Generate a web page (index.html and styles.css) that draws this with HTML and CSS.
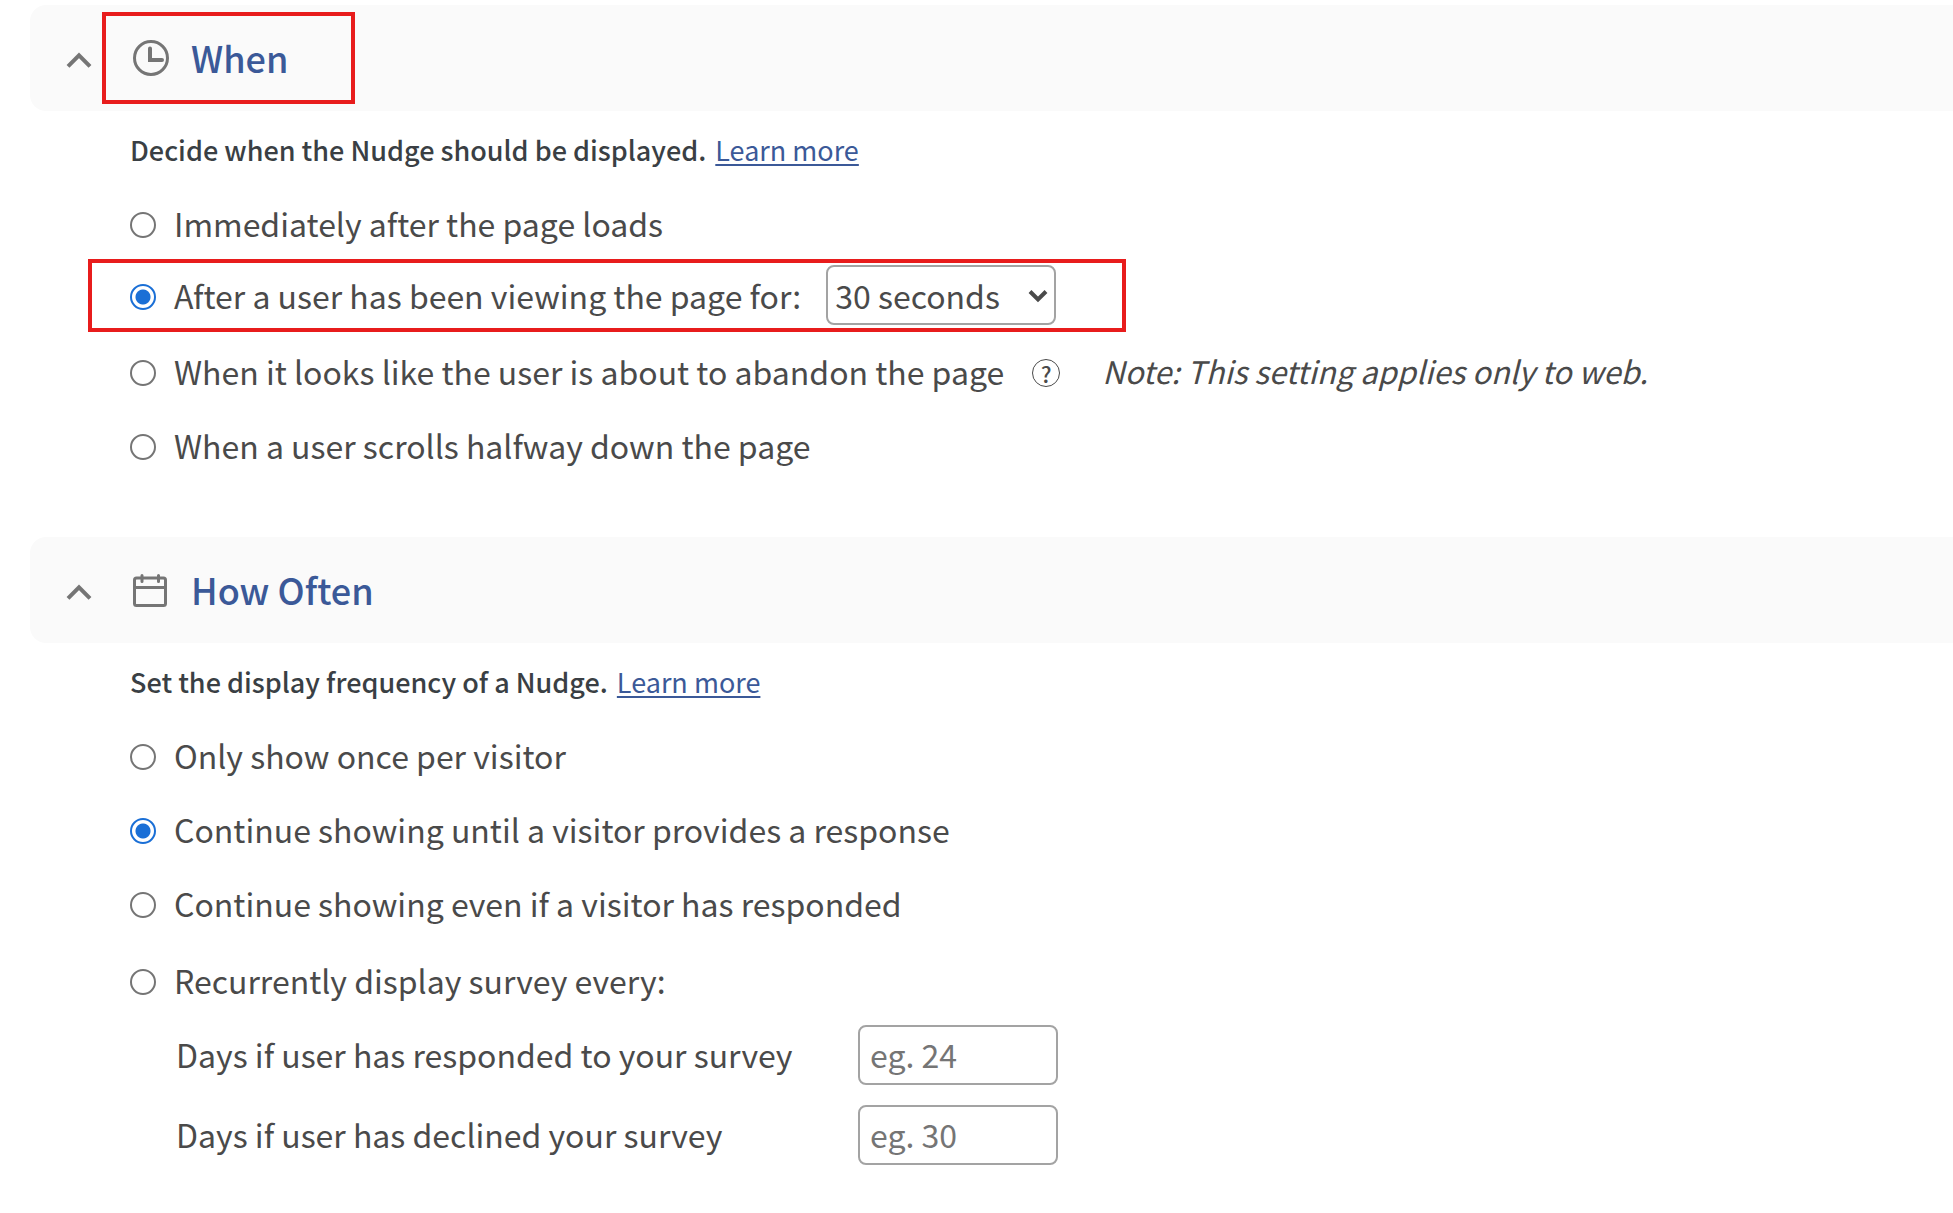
FILE: index.html
```html
<!doctype html>
<html lang="en">
<head>
<meta charset="utf-8">
<title>Nudge display settings</title>
<link rel="stylesheet" href="styles.css">
</head>

<body>

<main>
  <!-- when -->
  <section class="panel">
    <header class="panel-head">
      <button class="toggle" type="button" aria-label="Collapse When">
        <svg width="26" height="16" viewBox="0 0 26 16"><path d="M2 14.300 13 3.300l11 11" fill="none" stroke="#757575" stroke-width="4"/></svg>
      </button>
      <div class="panel-title marked">
        <svg class="icon" width="36" height="36" viewBox="0 0 36 36" fill="none" stroke="#757575"><circle cx="18" cy="18" r="16.500" stroke-width="3"/><path d="M17 8.500V20h12" stroke-width="4" stroke-linecap="round"/></svg>
        <h2>When</h2>
      </div>
    </header>

    <div class="panel-body">
      <p class="lead"><strong>Decide when the Nudge should be displayed.</strong> <a href="#">Learn more</a></p>
      <div class="options">
        <div class="option">
          <input type="radio" name="when" id="when-load">
          <label for="when-load">Immediately after the page loads</label>
        </div>
        <div class="option timed marked">
          <input type="radio" name="when" id="when-timed" checked>
          <label for="when-timed">After a user has been viewing the page for:</label>
          <span class="select">
            <select aria-label="Viewing time">
              <option>30 seconds</option>
              <option>60 seconds</option>
            </select>
            <svg width="20" height="14" viewBox="0 0 20 14"><path d="M2 2.500l8 8 8-8" fill="none" stroke="#4a4a4a" stroke-width="4"/></svg>
          </span>
        </div>
        <div class="option">
          <input type="radio" name="when" id="when-abandon">
          <label for="when-abandon">When it looks like the user is about to abandon the page</label>
          <button class="help" type="button" aria-label="Help">?</button>
          <em>Note: This setting applies only to web.</em>
        </div>
        <div class="option">
          <input type="radio" name="when" id="when-scroll">
          <label for="when-scroll">When a user scrolls halfway down the page</label>
        </div>
      </div>
    </div>
  </section>

  <!-- how often -->
  <section class="panel">
    <header class="panel-head">
      <button class="toggle" type="button" aria-label="Collapse How Often">
        <svg width="26" height="16" viewBox="0 0 26 16"><path d="M2 14.300 13 3.300l11 11" fill="none" stroke="#757575" stroke-width="4"/></svg>
      </button>
      <div class="panel-title">
        <svg class="icon" width="36" height="36" viewBox="0 0 36 36" fill="none" stroke="#757575" stroke-width="3"><rect x="1.500" y="6" width="31" height="27.500" rx="2"/><path d="M1.500 15.500h31"/><path d="M9 3.500v6M25.500 3.500v6" stroke-linecap="round"/></svg>
        <h2>How Often</h2>
      </div>
    </header>

    <div class="panel-body">
      <p class="lead"><strong>Set the display frequency of a Nudge.</strong> <a href="#">Learn more</a></p>
      <div class="options">
        <div class="option">
          <input type="radio" name="often" id="often-once">
          <label for="often-once">Only show once per visitor</label>
        </div>
        <div class="option">
          <input type="radio" name="often" id="often-until" checked>
          <label for="often-until">Continue showing until a visitor provides a response</label>
        </div>
        <div class="option">
          <input type="radio" name="often" id="often-even">
          <label for="often-even">Continue showing even if a visitor has responded</label>
        </div>
        <div class="option recurring">
          <input type="radio" name="often" id="often-recur">
          <label for="often-recur">Recurrently display survey every:</label>
        </div>
      </div>
      <div class="days">
        <label for="days-responded">Days if user has responded to your survey</label>
        <input type="text" id="days-responded" placeholder="eg. 24">
        <label for="days-declined">Days if user has declined your survey</label>
        <input type="text" id="days-declined" placeholder="eg. 30">
      </div>
    </div>
  </section>
</main>

</body>
</html>
```

FILE: styles.css
```css
:root {
  --head:   #fafafa;
  --txt:    #4a4a4a;
  --strong: #3a3f44;
  --link:   #3b5998;
  --radio:  #1a6fd6;
  --line:   #a3a3a3;
  --mark:   #e81c1c;
}

*,
*::after {
  box-sizing: border-box;
  margin: 0;
  padding: 0;
}
body {
  font-family: "Noto Sans CJK SC", sans-serif;
  font-size: 32px;
  line-height: 48px;
  background: #fff;
  color: var(--txt);
}
main {
  padding: 5px 0 0 30px;
}

/* panel header */
.panel {
  margin-bottom: 62px;
}
.panel-head {
  display: flex;
  align-items: center;
  height: 106px;
  background: var(--head);
  border-radius: 16px 0 0 16px;
}
.toggle {
  display: flex;
  width: 72px;
  padding: 3px 0 0 36px;
  border: 0;
  background: none;
}
.toggle svg,
.icon {
  flex: none;
}
.panel-title {
  position: relative;
  display: flex;
  align-items: center;
  gap: 22px;
  height: 92px;
  padding: 0 67px 0 31px;
}
h2 {
  padding-bottom: 2px;
  font-size: 36px;
  font-weight: 500;
  color: var(--link);
  white-space: nowrap;
}

/* red frame drawn over the marked parts */
.marked::after {
  content: "";
  position: absolute;
  inset: 0;
  border: 4px solid var(--mark);
  pointer-events: none;
}

/* panel body */
.panel-body {
  padding: 15px 0 0 100px;
}
.lead {
  font-size: 27px;
}
.lead strong {
  font-weight: 500;
  color: var(--strong);
}
a {
  margin-left: 3px;
  color: var(--link);
  text-underline-offset: 3px;
}
.options {
  display: grid;
  gap: 18px;
  margin-top: 23px;
}
.option {
  display: flex;
  align-items: center;
  height: 56px;
  white-space: nowrap;
}
.option label,
.option em {
  padding-bottom: 4px;
}
.option em {
  font-size: 31px;
}
input[type=radio] {
  appearance: none;
  width: 26px;
  height: 26px;
  margin-right: 18px;
  border: 2px solid #757575;
  border-radius: 50%;
}
input[type=radio]:checked {
  border-color: var(--radio);
  background: radial-gradient(circle, var(--radio) 7px, #fff 8px);
}
.timed {
  position: relative;
  padding-bottom: 4px;
}
.timed::after {
  inset: -12px auto -5px -42px;
  width: 1038px;
}
.recurring {
  padding-top: 6px;
}

/* fields */
select,
input[type=text] {
  height: 60px;
  border: 2px solid var(--line);
  border-radius: 8px;
  background: #fff;
  color: var(--txt);
  font: inherit;
}
.select {
  position: relative;
  height: 60px;
  margin: 0 0 4px 25px;
}
select {
  appearance: none;
  display: block;
  width: 230px;
  padding-left: 7px;
}
.select svg {
  position: absolute;
  top: 24px;
  right: 8px;
  pointer-events: none;
}
.help {
  width: 28px;
  height: 28px;
  margin: 0 42px 0 28px;
  border: 1px solid var(--txt);
  border-radius: 50%;
  background: none;
  color: var(--txt);
  font: 500 22px/24px "Noto Sans CJK SC", sans-serif;
}
.days {
  display: grid;
  grid-template-columns: 682px 200px;
  align-items: center;
  gap: 20px 0;
  margin: 18px 0 0 46px;
}
.days label {
  padding-bottom: 2px;
}
input[type=text] {
  padding: 0 10px 3px;
}
input::placeholder {
  color: #757575;
}
```
